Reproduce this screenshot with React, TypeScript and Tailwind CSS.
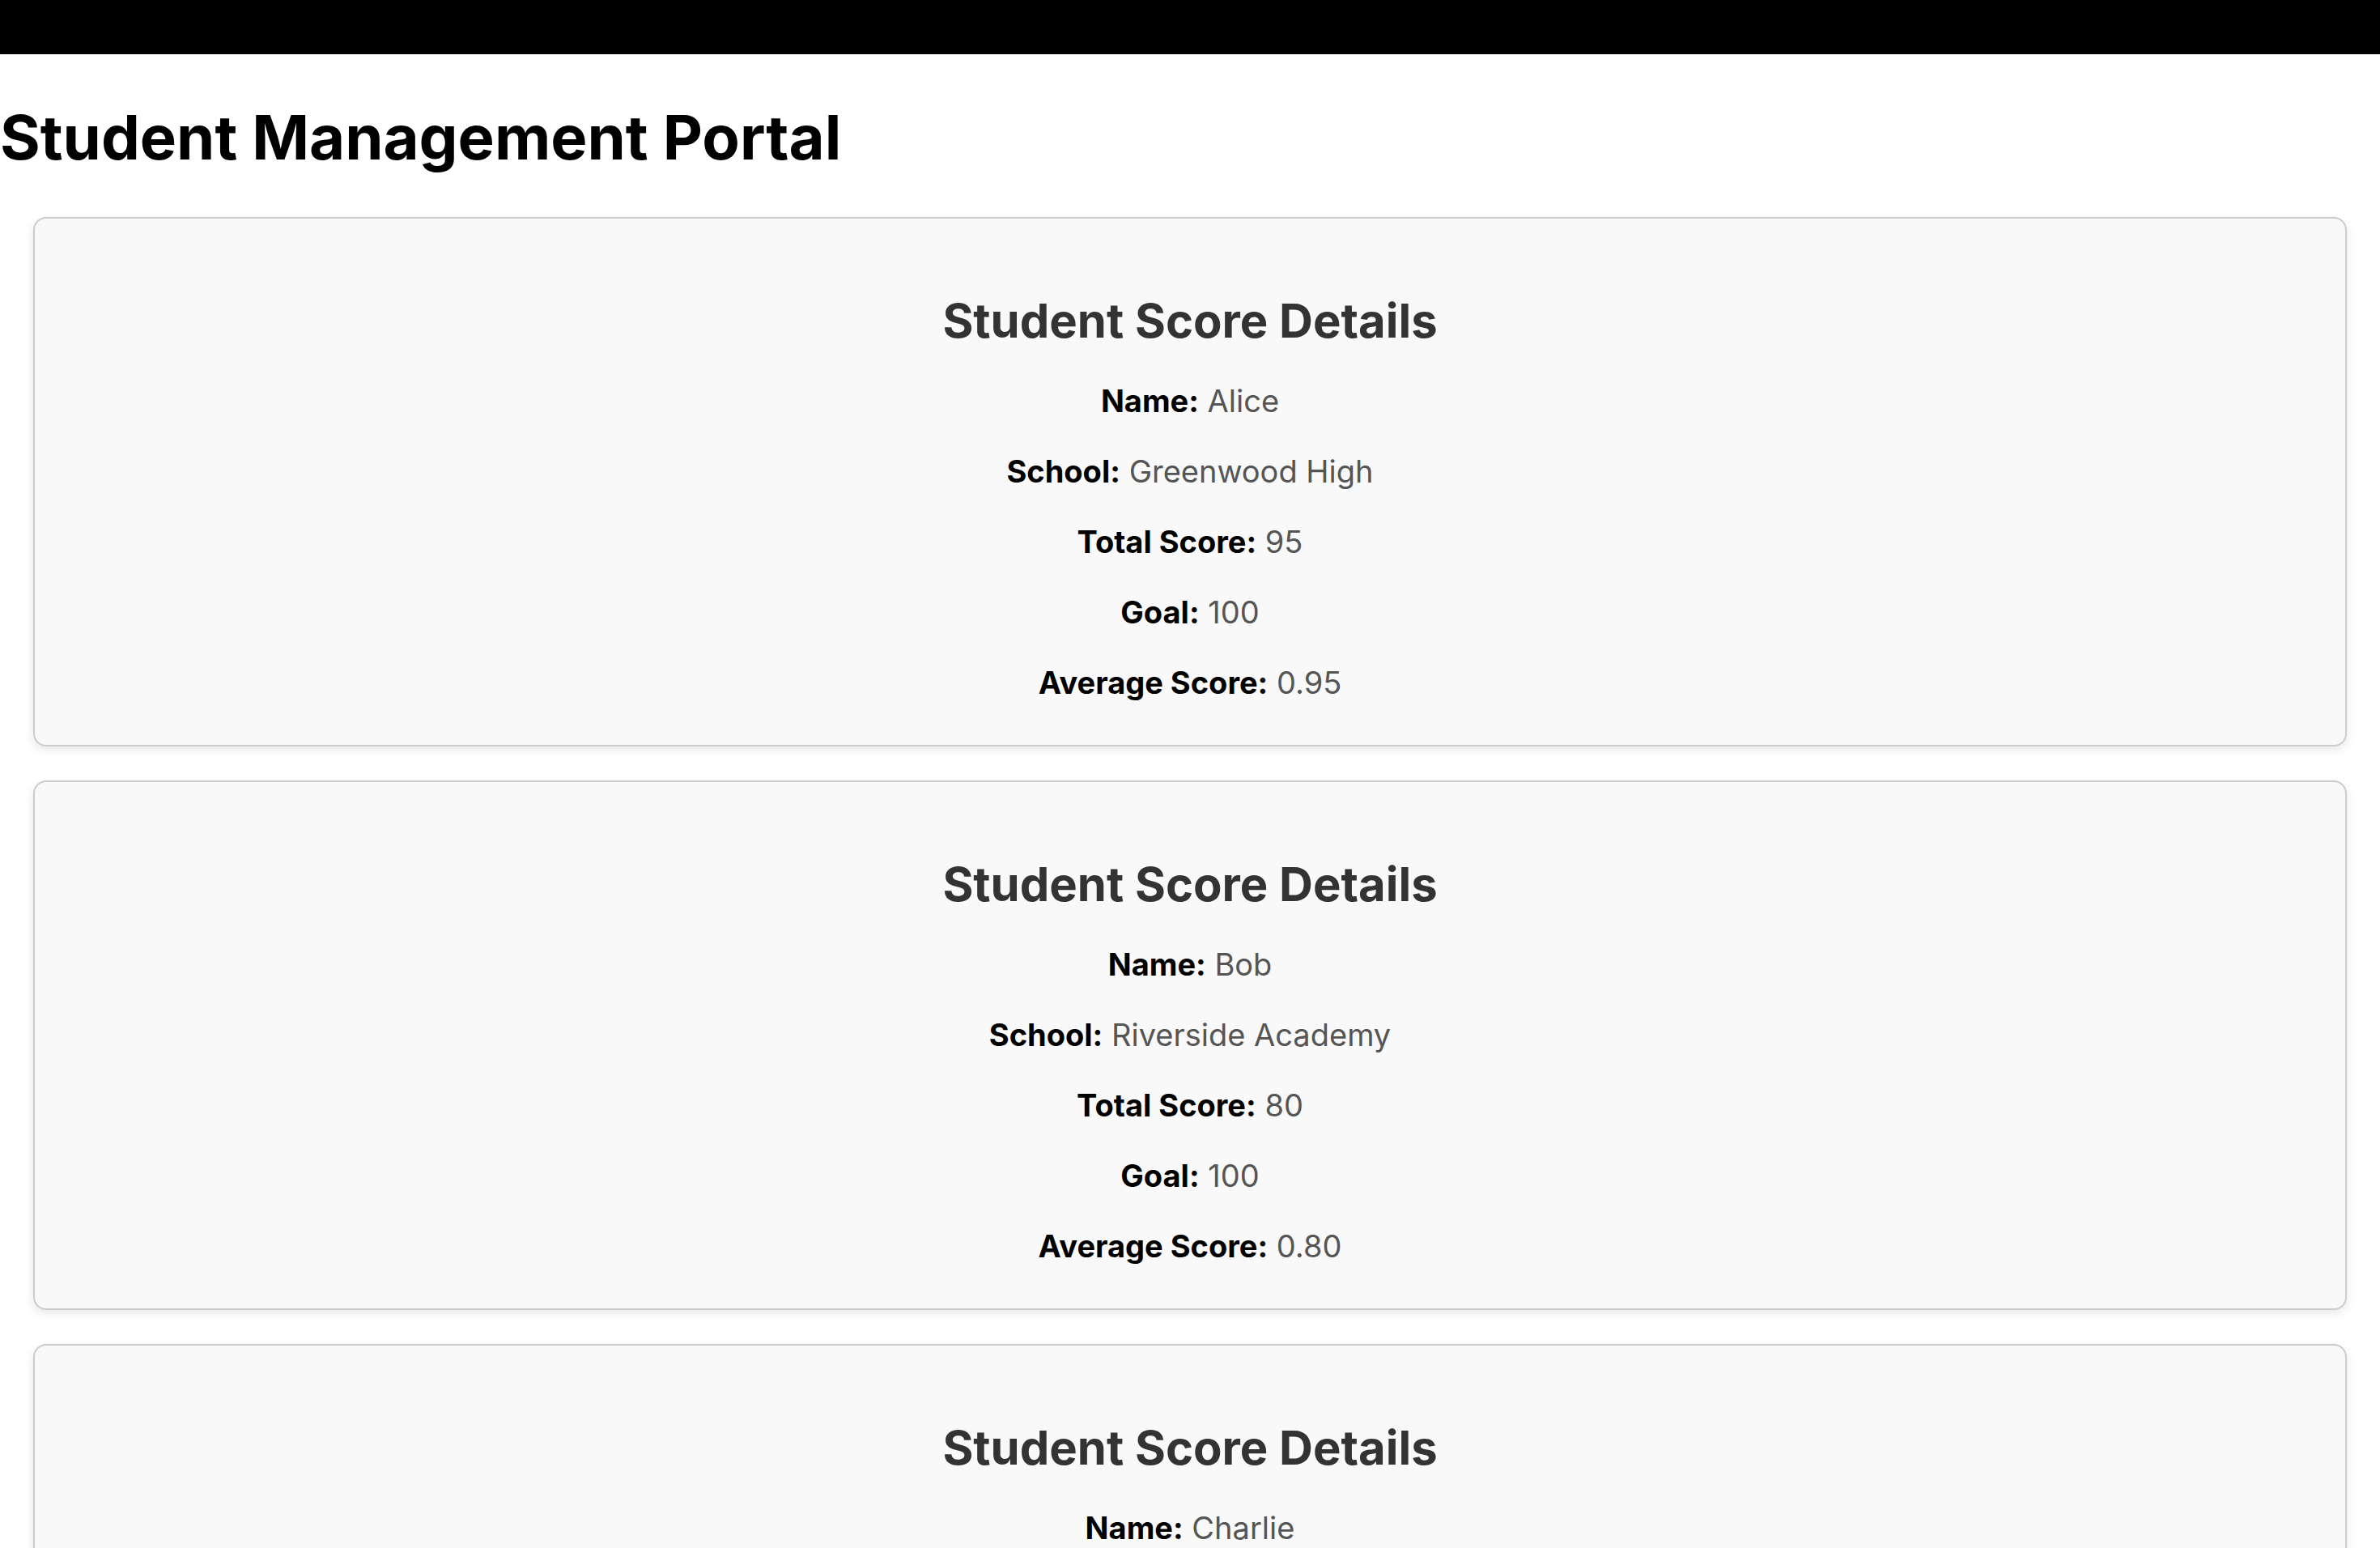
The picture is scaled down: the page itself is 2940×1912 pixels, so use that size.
import React from 'react';

type Student = {
  name: string;
  school: string;
  total: number;
  goal: number;
};

const students: Student[] = [
  { name: 'Alice', school: 'Greenwood High', total: 95, goal: 100 },
  { name: 'Bob', school: 'Riverside Academy', total: 80, goal: 100 },
  { name: 'Charlie', school: 'Lakeside School', total: 70, goal: 100 },
];

function Row({ label, value }: { label: string; value: string | number }) {
  return (
    <p className="text-[38px] leading-[51px]">
      <span className="font-bold text-black">{label}:</span>{' '}
      <span className="text-[#555555]">{value}</span>
    </p>
  );
}

function ScoreCard({ s }: { s: Student }) {
  return (
    <div className="bg-[#f9f9f9] border-2 border-[#cccccc] rounded-[16px] shadow-[0_4px_12px_rgba(0,0,0,0.1)] px-10 pt-[91px] pb-[51px] text-center">
      <h2 className="text-[58px] leading-[70px] font-bold text-[#333333] mb-[39px]">Student Score Details</h2>
      <div className="flex flex-col gap-[36px]">
        <Row label="Name" value={s.name} />
        <Row label="School" value={s.school} />
        <Row label="Total Score" value={s.total} />
        <Row label="Goal" value={s.goal} />
        <Row label="Average Score" value={(s.total / s.goal).toFixed(2)} />
      </div>
    </div>
  );
}

export default function App() {
  return (
    <div className="min-h-screen bg-white font-['Inter',sans-serif] text-black">
      <div className="h-[67px] bg-black" />
      <h1 className="text-[76px] leading-[92px] font-bold mt-[56px] mb-[53px]">Student Management Portal</h1>
      <div className="flex flex-col gap-[42px] px-[41px] pb-[42px]">
        {students.map((s) => (
          <ScoreCard key={s.name} s={s} />
        ))}
      </div>
    </div>
  );
}
